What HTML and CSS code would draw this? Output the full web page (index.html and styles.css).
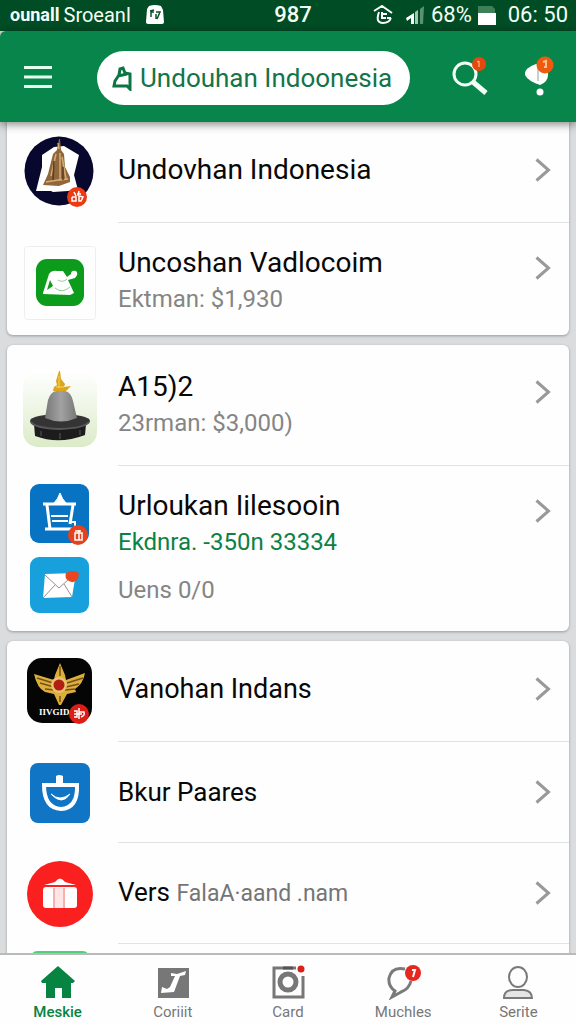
FILE: index.html
```html
<!DOCTYPE html>
<html lang="id">
<head>
<meta charset="utf-8">
<meta name="viewport" content="width=device-width, initial-scale=1">
<title>Undouhan Indoonesia</title>
<link rel="stylesheet" href="styles.css">
</head>
<body class="app">
<div class="status">
  <div class="status-left">
    <span class="carrier-mark">ounall</span>
    <span class="carrier">Sroeanl</span>
    <svg class="status-tag" width="20" height="20" viewBox="0 0 20 20"><path d="M4 1Q10-1 16 1L18 5 19 17Q19 19 17 19H3Q1 19 1 17L2 4Z" fill="#fff"/><path d="M6 12V7h3M11 7h4l-3 7M5 6l4-1M11 9v5" fill="none" stroke="#0a5428" stroke-width="1.500"/></svg>
  </div>
  <span class="status-mid">987</span>
  <div class="status-right">
    <svg width="20" height="20" viewBox="0 0 20 20" fill="none" stroke="#fff" stroke-width="2"><path d="M1 6 9 1l10 7M6 7Q2 18 10 18q6 0 8-5M9 7v6h4M9 9h5M14 13h4"/></svg>
    <svg class="signal" width="20" height="20" viewBox="0 0 20 20"><path d="M1 13 9 8V19H6V13L2 16Z" fill="#fff"/><path d="M10 7l3-2v14h-3z" fill="#a5c7b1"/><path d="M15 4l4-3-1 18h-3z" fill="#5b9270"/></svg>
    <span>68%</span>
    <svg width="18" height="20" viewBox="0 0 18 20"><path d="M0 1h14l3 3v4H0z" fill="#3f7f57"/><path d="M0 8h18v12H0z" fill="#fff"/></svg>
    <span class="clock">06: 50</span>
  </div>
</div>

<header class="topbar">
  <button class="icon-button menu" aria-label="Menu"><svg width="28" height="24" viewBox="0 0 28 24"><path d="M0 2.500h28M0 12h28M0 21.500h28" stroke="#e4fff0" stroke-width="3"/></svg></button>
  <label class="search">
    <svg width="20" height="26" viewBox="0 0 20 26" fill="none" stroke="#0b7544" stroke-width="3"><path d="M7 10 3 16 2 21H15L18 24V9L13 8 11 3 8 4 7 10M6 11l9-2"/></svg>
    <input class="search-input" type="text" value="Undouhan Indoonesia" aria-label="Undouhan">
  </label>
  <button class="icon-button" aria-label="Cari"><svg width="40" height="44" viewBox="0 0 40 44"><circle cx="15" cy="19" r="11" fill="none" stroke="#f1fff6" stroke-width="3"/><path d="M23 27 36 38" stroke="#f1fff6" stroke-width="5"/><circle cx="29" cy="9" r="7" fill="#e5480d"/><path d="M27 7l2-1v6" fill="none" stroke="#ffc7a8" stroke-width="1"/></svg></button>
  <button class="icon-button notice" aria-label="Notifikasi"><svg width="40" height="44" viewBox="0 0 40 44"><path d="M16 9Q4 13 5 20 8 26 20 30 28 27 28 20V11Z" fill="#fff"/><path d="M18 11v15" stroke="#c3d2ca" stroke-width="2"/><circle cx="20" cy="37" r="3.500" fill="#fff"/><circle cx="25" cy="10" r="8.500" fill="#ee5b10"/><path d="M23 7l3-1v6h-2" fill="none" stroke="#ffc28c" stroke-width="2"/></svg></button>
</header>

<main class="content">
  <section class="card card-first">
    <a class="row" href="#indonesia">
      <span class="thumb"><svg width="72" height="76" viewBox="0 0 72 76"><circle cx="35" cy="37" r="34.500" fill="#08082e"/><path d="M30 13 18 21V33L12 57 27 57l2 1 15-1 10-1-4-15 5-20L40 12Z" fill="#fff"/><path d="M35 5 36 5 37 16 40 20 41 33 46 43V48L35 52 19 51 24 40 29 20 33 16Z" fill="#90663c"/><path d="M34 9 35 15M32 20 27 42M36 19V47M38 23l4 22M22 48q10-2 22-3" stroke="#d6ad70" stroke-width="1.500" fill="none"/><path d="M30 27 29 46M39 33v13" stroke="#593c24" stroke-width="1.500"/><circle cx="53" cy="63" r="10" fill="#ec3b12"/><path d="M50 58l2 4M55 57l-1 5M48 63h4v4h-4v-4M55 62l4 1-2 4h-2v-5M53 60h4" stroke="#fff" fill="none" stroke-width="1.500"/></svg></span>
      <span class="body"><span class="title">Undovhan Indonesia</span><svg class="chevron" viewBox="0 0 16 24"><path d="M1.500 1.500 13.500 12 1.500 22.500"/></svg></span>
    </a>
    <a class="row row-detail" href="#vadlocoim">
      <span class="thumb"><svg width="72" height="74" viewBox="0 0 72 74"><rect x=".5" y=".5" width="71" height="73" rx="3" fill="#fefefe" stroke="#eeeeee"/><rect x="12" y="13" width="48" height="47" rx="11" fill="#0d9b1b"/><path d="M19 47 25 28Q28 24 33 25L39 25 43 31 47 28Q47 24 52 25 55 28 51 32L44 34 50 47 46 49 19 48Z" fill="#fff"/><path d="M26 34 23 44 29 40Z" fill="#0d9b1b"/><path d="M31 42q7 6 15-1M34 34q5 3 9-1" fill="none" stroke="#8fcf95"/></svg></span>
      <span class="body"><span class="texts"><span class="title">Uncoshan Vadlocoim</span><span class="sub">Ektman: $1,930</span></span><svg class="chevron" viewBox="0 0 16 24"><path d="M1.500 1.500 13.500 12 1.500 22.500"/></svg></span>
    </a>
  </section>

  <section class="card">
    <a class="row row-detail row-tall" href="#a152">
      <span class="thumb"><svg width="74" height="76" viewBox="0 0 74 76"><defs><linearGradient id="pale" x2="0" y2="1"><stop stop-color="#fff"/><stop offset="1" stop-color="#dcebc9"/></linearGradient><linearGradient id="bell"><stop stop-color="#777"/><stop offset=".5" stop-color="#a2a2a2"/><stop offset="1" stop-color="#777"/></linearGradient></defs><rect width="74" height="76" rx="15" fill="url(#pale)"/><path d="M11 53 12 65Q36 74 62 64L63 53Z" fill="#1c1c1c"/><ellipse cx="37" cy="50" rx="30" ry="7" fill="#343434"/><path d="M8 51q3 6 29 7 25-1 29-7" fill="none" stroke="#575757" stroke-width="2"/><path d="M18 60v5M37 62v6M57 59v5" stroke="#3a3a3a" stroke-width="2"/><path d="M22 47 25 29Q28 20 34 20H42Q48 21 50 30L54 47Q38 54 22 47Z" fill="url(#bell)"/><path d="M36 0h1l1 8 4 5-1 3 7-1-5 5H30l1-4 3-2-1-4Z" fill="#dca51b"/><path d="M36 5v12M33 16h8" stroke="#f8d65a"/></svg></span>
      <span class="body"><span class="texts"><span class="title">A15)2</span><span class="sub">23rman: $3,000)</span></span><svg class="chevron" viewBox="0 0 16 24"><path d="M1.500 1.500 13.500 12 1.500 22.500"/></svg></span>
    </a>
    <a class="row row-detail row-double" href="#iilesooin">
      <span class="thumb">
        <svg width="60" height="61" viewBox="0 0 60 61"><rect width="59" height="59" rx="9" fill="#0872c3"/><path d="M13 20H46M17 21 20 45M43 21 40 40M15 45H42" fill="none" stroke="#fff" stroke-width="3"/><path d="M24 19Q28 15 30 9q2 6 6 10Z" fill="#fff" stroke="#fff"/><path d="M21 32h17M22 37h16M40 38h5v5" fill="none" stroke="#fff" stroke-width="2"/><circle cx="48" cy="51" r="10" fill="#e7401d"/><path d="M45 49h7v7h-7zM49 46v10M45 47h6" fill="none" stroke="#fff" stroke-width="1.500"/></svg>
        <svg width="60" height="56" viewBox="0 0 60 56"><rect width="59" height="56" rx="9" fill="#17a0dc"/><path d="M15 17 46 16 42 40 13 41Z" fill="#fff"/><path d="M15 18 29 31 39 22M13 41 25 28M42 40 34 27" fill="none" stroke="#9a8d8e"/><path d="M36 16q6-4 13 0l-1 6q-4 5-9 2-5-3-3-8Z" fill="#eb461f"/></svg>
      </span>
      <span class="body"><span class="texts"><span class="title">Urloukan Iilesooin</span><span class="sub sub-green">Ekdnra. -350n 33334</span><span class="sub sub-last">Uens 0/0</span></span><svg class="chevron" viewBox="0 0 16 24"><path d="M1.500 1.500 13.500 12 1.500 22.500"/></svg></span>
    </a>
  </section>

  <section class="card card-compact">
    <a class="row" href="#indans">
      <span class="thumb"><svg width="66" height="66" viewBox="0 0 66 66"><rect width="65" height="65" rx="15" fill="#050505"/><path d="M33 5 38 17 39 22 58 15Q56 26 48 31L49 34 40 36 34 47H32L27 36 18 34Q10 30 7 16L27 22 28 17Z" fill="#dcae3c"/><path d="M10 20 26 25M13 25 27 29M18 31 28 32M56 20 40 25M52 26 39 29M48 31 38 32M33 8v10M33 38v6" stroke="#765015" stroke-width="1.500"/><circle cx="32" cy="27" r="8" fill="#e7c270"/><circle cx="32" cy="27" r="5.500" fill="#b31d12"/><text class="emblem" x="12" y="57">IIVGID</text><circle cx="52" cy="56" r="10" fill="#dd1d16"/><path d="M47 53h3v6h-3M52 50v11M52 54h5q1 4-3 5M47 56h8" fill="none" stroke="#fff" stroke-width="1.500"/></svg></span>
      <span class="body"><span class="title">Vanohan Indans</span><svg class="chevron" viewBox="0 0 16 24"><path d="M1.500 1.500 13.500 12 1.500 22.500"/></svg></span>
    </a>
    <a class="row row-centered" href="#paares">
      <span class="thumb"><svg width="60" height="60" viewBox="0 0 60 60"><rect width="60" height="60" rx="8" fill="#0f75c4"/><path d="M26 21V13q3-2 7 0v8" fill="#fff"/><path d="M14 22H47Q48 45 31 46 14 45 14 22Z" fill="none" stroke="#fff" stroke-width="4"/><path d="M21 31q9 8 19 0-8 12-19 0Z" fill="#fff" stroke="#fff"/></svg></span>
      <span class="body"><span class="title title-small">Bkur Paares</span><svg class="chevron" viewBox="0 0 16 24"><path d="M1.500 1.500 13.500 12 1.500 22.500"/></svg></span>
    </a>
    <a class="row row-centered" href="#vers">
      <span class="thumb"><svg width="66" height="66" viewBox="0 0 66 66"><circle cx="33" cy="33" r="33" fill="#f9201f"/><path d="M17 24 28 21Q33 14 38 21l11 3Z" fill="#fff"/><rect x="16" y="26" width="34" height="21" rx="3" fill="#fff"/><path d="M28 27h8v20h-8z" fill="#ffe6e6"/><path d="M27 27v20M37 27v20" stroke="#ef6262"/></svg></span>
      <span class="body"><span class="title title-small">Vers <span class="muted">FalaA·aand .nam</span></span><svg class="chevron" viewBox="0 0 16 24"><path d="M1.500 1.500 13.500 12 1.500 22.500"/></svg></span>
    </a>
    <div class="row row-next"><span class="thumb"><span class="next-icon"></span></span><span class="body"></span></div>
  </section>
</main>

<nav class="tabs">
  <a class="tab tab-active" href="#home"><svg width="36" height="36" viewBox="0 0 36 36"><path d="M18 2 35 17 33 19H31V34H22V24H15V34H6V19H2L1 17Z" fill="#078342"/></svg><span>Meskie</span></a>
  <a class="tab" href="#coriiit"><svg width="36" height="36" viewBox="0 0 36 36"><path d="M3 4h31v30H3z" fill="#777"/><path d="M16 9 22 10 31 7 30 11 25 12 19 28 6 29 7 23 12 25 15 23 20 12H16Z" fill="#fff"/></svg><span>Coriiit</span></a>
  <a class="tab" href="#card"><svg width="36" height="36" viewBox="0 0 36 36"><path d="M26 4H4v29h29V12" fill="none" stroke="#777" stroke-width="3"/><circle cx="18" cy="18" r="8" fill="none" stroke="#777" stroke-width="5"/><path d="M13 4h10" stroke="#555" stroke-width="3"/><circle cx="31" cy="5" r="3.500" fill="#d92019"/></svg><span>Card</span></a>
  <a class="tab" href="#muchles"><svg width="40" height="36" viewBox="0 0 40 36"><path d="M22 5Q9 2 6 14 5 22 12 27L9 33 18 28Q26 25 28 17" fill="none" stroke="#7a7a7a" stroke-width="3"/><circle cx="30" cy="9" r="8" fill="#e52720"/><path d="M29 6h3l-2 7" fill="none" stroke="#fff" stroke-width="2"/></svg><span>Muchles</span></a>
  <a class="tab" href="#serite"><svg width="36" height="36" viewBox="0 0 36 36"><ellipse cx="18" cy="13" rx="9" ry="10" fill="none" stroke="#7a7a7a" stroke-width="2"/><path d="M4 34Q4 26 13 26H24Q32 27 32 34Z" fill="#e5e5e5" stroke="#7a7a7a" stroke-width="2"/></svg><span>Serite</span></a>
</nav>
</body>
</html>
```
FILE: styles.css
```css
* { box-sizing: border-box; }

.app {
  margin: 0;
  height: 100vh;
  display: flex;
  flex-direction: column;
  overflow: hidden;
  background: #dbdcdd;
  color: #080808;
  font-family: Roboto, "Liberation Sans", sans-serif;
}

svg { display: block; flex: none; }
a { color: inherit; text-decoration: none; }

.status {
  display: grid;
  grid-template-columns: 1fr auto 1fr;
  align-items: center;
  flex: none;
  height: 31px;
  padding: 0 8px 2px 10px;
  background: #004d25;
  color: #f4fff8;
  font-size: 22px;
  line-height: 28px;
}
.status-left, .status-right { display: flex; align-items: center; }
.status-left { gap: 4px; }
.status-right { justify-content: flex-end; gap: 6px; }
.carrier-mark { font-size: 18px; font-weight: 700; }
.carrier { font-size: 20px; }
.status-tag { margin-left: 10px; }
.status-mid { padding-left: 8px; font-weight: 500; }
.signal { margin-left: 6px; }
.clock { margin-left: 6px; }

.topbar {
  position: relative;
  display: flex;
  align-items: center;
  flex: none;
  height: 91px;
  padding: 0 16px 0 24px;
  background: #08854b;
  border-radius: 6px 0 0 0;
  box-shadow: 0 2px 10px rgba(0, 0, 0, .5);
}
.icon-button { flex: none; padding: 0; border: 0; background: none; }
.notice { margin-left: 30px; }
.search {
  display: flex;
  align-items: center;
  flex: 1;
  min-width: 0;
  height: 54px;
  margin: 2px 40px 0 45px;
  padding: 0 12px 0 15px;
  gap: 8px;
  border-radius: 27px;
  background: #fff;
}
.search-input {
  flex: 1;
  min-width: 0;
  padding: 0;
  border: 0;
  outline: 0;
  background: none;
  color: #147448;
  font: 26px/36px Roboto, "Liberation Sans", sans-serif;
}

.content {
  flex: 1;
  min-height: 0;
  overflow: hidden;
  display: flex;
  flex-direction: column;
  gap: 10px;
  padding: 0 7px;
}
.card {
  flex: none;
  border-radius: 6px;
  background: #fefefe;
  box-shadow: 0 1px 3px rgba(0, 0, 0, .3);
}
.card-first { border-radius: 0 0 6px 6px; }

.row { display: flex; min-height: 101px; padding-bottom: 0; }
.thumb {
  display: flex;
  flex-direction: column;
  align-items: center;
  justify-content: center;
  flex: none;
  width: 106px;
}
.body {
  display: flex;
  align-items: center;
  justify-content: space-between;
  flex: 1;
  min-width: 0;
  margin-left: 5px;
  padding: 0 18px 5px 0;
  border-bottom: 1px solid #e2e3e3;
}
.row-centered .body { padding-bottom: 0; }
.row:last-child .body { border-bottom: 0; }
.row:first-child .thumb { padding-bottom: 2px; }
.texts { display: flex; flex-direction: column; }
.title { font-size: 28px; line-height: 36px; }
.card-compact .title { font-size: 27px; }
.card-compact .title-small { font-size: 26px; }
.sub { color: #858585; font-size: 24px; line-height: 36px; }
.sub-green { color: #0d8145; }
.sub-last { margin-top: 12px; }
.muted { color: #757575; font-size: 23px; }
.chevron {
  width: 16px;
  height: 24px;
  fill: none;
  stroke: #999;
  stroke-width: 3px;
}

.row-detail { min-height: 112px; }
.row-detail .body { align-items: flex-start; padding-top: 22px; }
.row-detail .chevron { margin-top: 11px; }
.row-detail .thumb { justify-content: flex-start; padding-top: 23px; }
.row-tall { min-height: 121px; }
.row-tall .body { padding-top: 24px; }
.row-tall .thumb { padding-top: 26px; }
.row-double { min-height: 165px; }
.row-double .thumb { padding-top: 18px; gap: 12px; }

.row-next { min-height: 60px; }
.row-next .thumb { justify-content: flex-start; padding-top: 7px; }
.next-icon { width: 58px; height: 58px; border-radius: 6px; background: #4fd07b; }
.emblem { fill: #fff; font: 700 9px "Liberation Serif", serif; }

.tabs {
  position: relative;
  display: grid;
  grid-template-columns: repeat(5, 1fr);
  flex: none;
  height: 71px;
  padding-top: 9px;
  border-top: 2px solid #b9bbbb;
  background: #fefefe;
}
.tab {
  display: flex;
  flex-direction: column;
  align-items: center;
  color: #777;
  font-size: 15px;
  line-height: 24px;
}
.tab-active { color: #078342; font-weight: 500; }
```
